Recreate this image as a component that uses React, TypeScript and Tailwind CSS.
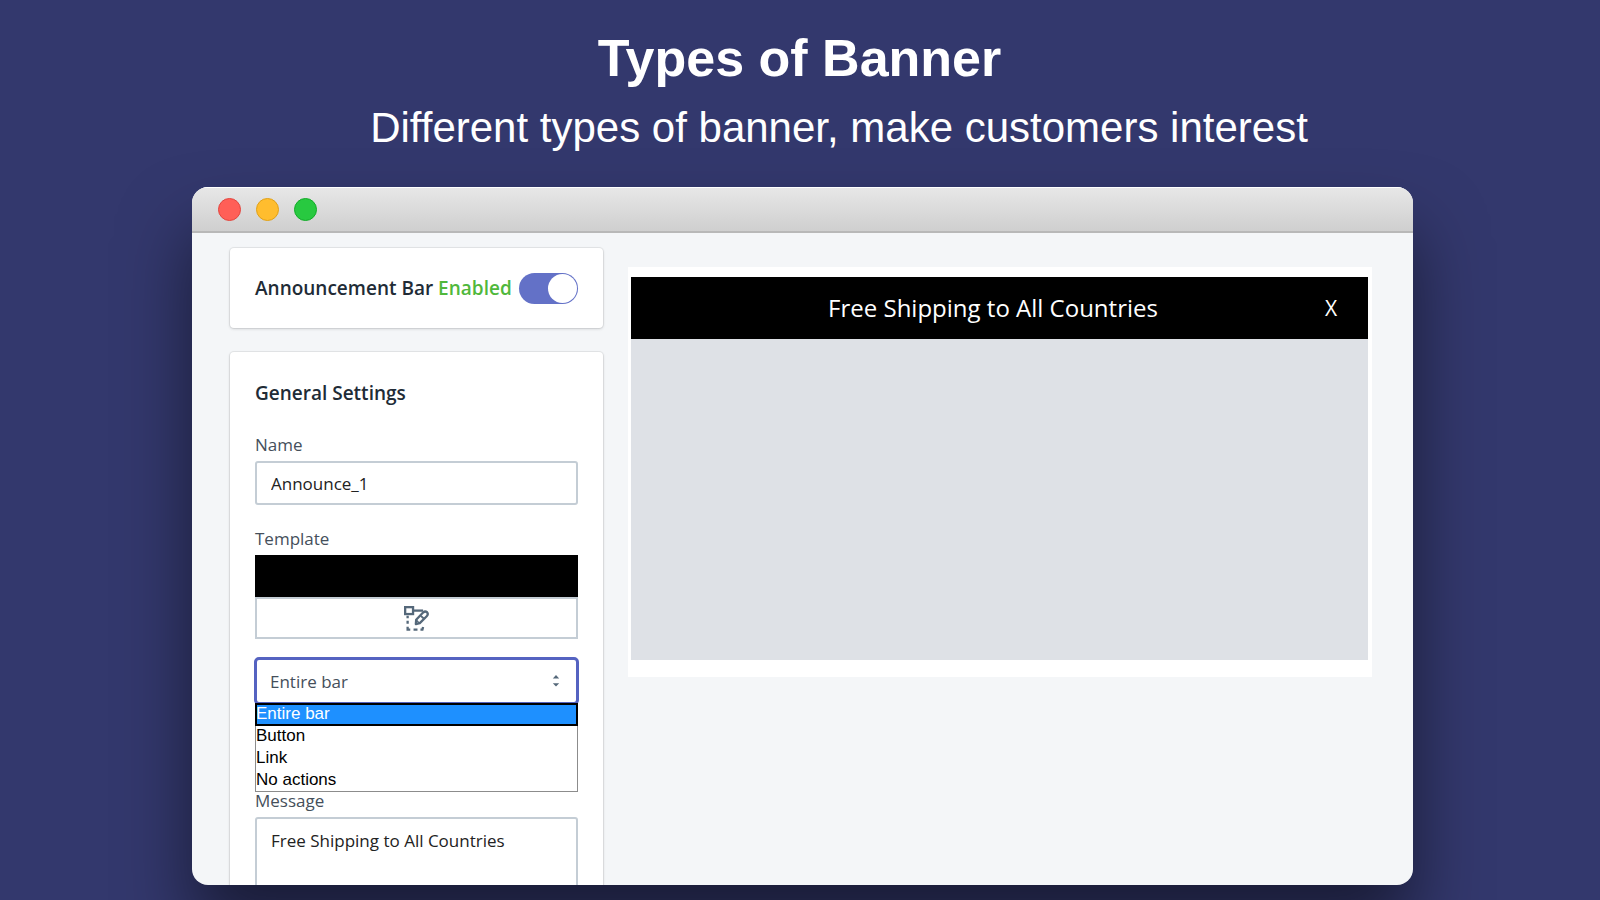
import { useState } from "react";

const actions = ["Entire bar", "Button", "Link", "No actions"];

function TemplateIcon() {
  return (
    <svg viewBox="0 0 76 76" className="h-[25px] w-[25px]" fill="none" stroke="#55687a" strokeWidth="7" aria-hidden="true">
      <rect x="3.5" y="3.5" width="24" height="21" />
      <path d="M28 14H58" />
      <path d="M36 55L37 42L58 20Q64 14 70 19Q75 25 69 31L48 52Z" strokeLinejoin="round" />
      <path d="M51 30L61 39" strokeWidth="6" />
      <path d="M37 42L47 53" strokeWidth="4" />
      <path d="M11 30V37M11 45V54M11 63V72H19M29 72H41M50 72H56L58 64" />
    </svg>
  );
}

function SortIcon() {
  return (
    <svg viewBox="0 0 8 14" className="pointer-events-none absolute right-[18px] top-4 h-[14px] w-2" fill="#55687a" aria-hidden="true">
      <path d="M0.8 4.4L4 1L7.2 4.4ZM0.8 9.2L4 12.6L7.2 9.2Z" />
    </svg>
  );
}

function EnableCard() {
  const [enabled, setEnabled] = useState(true);
  return (
    <section className="flex h-20 items-center justify-between rounded-[4px] bg-white px-[25px] shadow-[0_0_0_1px_rgba(63,63,68,0.08),0_1px_3px_rgba(63,63,68,0.2)]">
      <h2 className="whitespace-nowrap text-[19px] font-semibold text-[#212b36]">
        Announcement Bar <span className="text-[#50b83c]">Enabled</span>
      </h2>
      <button
        type="button"
        role="switch"
        aria-checked={enabled}
        aria-label="Announcement Bar"
        onClick={() => setEnabled(!enabled)}
        className={
          enabled
            ? "flex h-[31px] w-[59px] shrink-0 justify-end rounded-full bg-[#6371c7] p-px"
            : "flex h-[31px] w-[59px] shrink-0 justify-start rounded-full bg-[#c4cdd5] p-px"
        }
      >
        <span className="size-[29px] rounded-full bg-white" />
      </button>
    </section>
  );
}

function SettingsCard() {
  const [action, setAction] = useState(actions[0]);
  return (
    <section className="mt-6 rounded-[4px] bg-white px-[25px] pt-[27px] pb-8 text-[17px] leading-6 text-[#454f5b] shadow-[0_0_0_1px_rgba(63,63,68,0.08),0_1px_3px_rgba(63,63,68,0.2)]">
      <h2 className="text-[19px] leading-7 font-semibold text-[#212b36]">General Settings</h2>

      <label htmlFor="name" className="mt-[26px] block">Name</label>
      <input
        id="name"
        defaultValue="Announce_1"
        className="mt-1 block h-11 w-full rounded-[3px] border-2 border-[#c4cdd5] bg-white px-[14px] text-[#222] outline-none"
      />

      <p className="mt-[22px]">Template</p>
      <div className="mt-1 h-[42px] bg-black" />
      <button type="button" aria-label="Edit template" className="flex h-[42px] w-full items-center justify-center border-2 border-[#c4cdd5] bg-white">
        <TemplateIcon />
      </button>

      <div className="relative mt-[19px] mb-[85px]">
        <select
          aria-label="Action"
          value={action}
          onChange={(e) => setAction(e.target.value)}
          className="block h-[46px] w-full appearance-none rounded-[4px] bg-white px-[15px] pt-px text-[#454f5b] outline-3 outline-offset-[-2px] outline-[#5563c1]"
        >
          {actions.map((a) => (
            <option key={a}>{a}</option>
          ))}
        </select>
        <SortIcon />
        <ul
          role="listbox"
          aria-label="Action options"
          className="absolute inset-x-0 top-[45px] border border-[#8c8c8c] bg-white font-['Liberation_Sans',sans-serif] text-black"
        >
          {actions.map((a) => (
            <li
              key={a}
              role="option"
              aria-selected={a === action}
              onClick={() => setAction(a)}
              className={
                a === action
                  ? "h-[21px] bg-[#1e90ff] leading-5 text-white outline-2 outline-offset-[-1px] outline-black"
                  : "h-[22px] leading-[22px]"
              }
            >
              {a}
            </li>
          ))}
        </ul>
      </div>

      <label htmlFor="message" className="block">Message</label>
      <textarea
        id="message"
        defaultValue="Free Shipping to All Countries"
        className="mt-1 block h-32 w-full resize-none rounded-[3px] border-2 border-[#c4cdd5] bg-white px-[14px] py-[10px] text-[#222] outline-none"
      />
    </section>
  );
}

function Preview() {
  return (
    <section className="mt-[19px] h-[410px] min-w-0 flex-1 bg-white pt-[10px] pr-1 pb-[17px] pl-[3px]">
      <div className="flex h-full flex-col bg-[#dee1e6]">
        <div className="flex h-[62px] items-center bg-black pr-[29px] pl-8 text-white">
          <p className="flex-1 text-center text-[24px] leading-8">Free Shipping to All Countries</p>
          <button type="button" aria-label="Close" className="w-4 text-[21px] leading-6">X</button>
        </div>
      </div>
    </section>
  );
}

export default function App() {
  return (
    <div className="flex h-screen flex-col overflow-hidden bg-[#33386d] pr-[187px] pb-[15px] pl-48 font-['Open_Sans','Noto_Sans',sans-serif]">
      <header className="h-[187px] shrink-0 pt-7 text-center font-['Liberation_Sans',sans-serif] whitespace-nowrap text-white">
        <h1 className="pr-[6px] text-[52px] leading-[60px] font-bold">Types of Banner</h1>
        <p className="mt-4 pl-[73px] text-[42px] leading-[48px]">Different types of banner, make customers interest</p>
      </header>

      <main className="flex min-h-0 flex-1 flex-col overflow-hidden rounded-[16px] bg-[#f4f6f8] shadow-[0_45px_70px_rgba(0,0,0,0.5)]">
        <div className="flex h-[46px] shrink-0 items-center gap-[15px] border-t border-b-2 border-t-white border-b-[#b8b8b8] bg-linear-to-b from-[#e7e7e7] to-[#cfcfcf] pl-[26px]">
          <span className="size-[23px] rounded-full border border-[#e2463f] bg-[#ff5f57]" />
          <span className="size-[23px] rounded-full border border-[#e1a116] bg-[#ffbd2e]" />
          <span className="size-[23px] rounded-full border border-[#12ac28] bg-[#28c940]" />
        </div>
        <div className="flex min-h-0 flex-1 items-start gap-[25px] pt-[15px] pr-[41px] pl-[38px]">
          <div className="w-[373px] shrink-0">
            <EnableCard />
            <SettingsCard />
          </div>
          <Preview />
        </div>
      </main>
    </div>
  );
}
